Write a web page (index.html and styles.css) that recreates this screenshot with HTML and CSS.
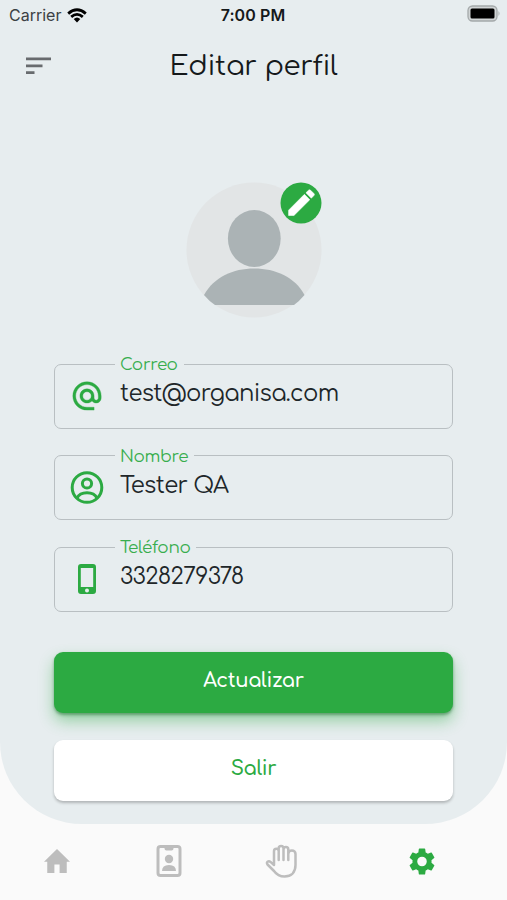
FILE: index.html
```html
<!DOCTYPE html>
<html lang="es">
<head>
<meta charset="utf-8">
<title>Editar perfil</title>
<link rel="stylesheet" href="styles.css">
</head>
<body>
<main class="panel">
  <div class="status">
    <div class="carrier"><span>Carrier</span>
      <svg width="20" height="15" viewBox="0 0 20 15" fill="none" stroke="#000" stroke-width="2.8"><path d="M1.2 5.6Q10-2 18.8 5.6M4.2 8.9Q10 3.9 15.8 8.9"/><path d="M6.7 11.1Q10 8 13.3 11.1L10 14.6Z" fill="#000" stroke="none"/></svg>
    </div>
    <div class="time">7:00 PM</div>
    <svg class="battery" width="34" height="18" viewBox="0 0 34 18"><rect x="1" y="1" width="29" height="15" rx="4.5" fill="#d0d4d5" stroke="#a4a9aa" stroke-width="1.3"/><rect x="3.500" y="3.500" width="24" height="10" rx="1.500" fill="#000"/><path d="M31.5 6q2 2.500 0 5z" fill="#a4a9aa"/></svg>
  </div>
  <header class="header">
    <svg class="menu" width="26" height="18" viewBox="0 0 26 18" fill="#686b6e"><path d="M0 .5h25v2.800H0zM0 7.500h16.500v2.800H0zM0 14.200h8.500v2.800H0z"/></svg>
    <h1>Editar perfil</h1>
  </header>
  <div class="avatar">
    <svg width="136" height="136" viewBox="0 0 136 136"><circle cx="68" cy="68" r="67.500" fill="#e2e5e6"/><ellipse cx="68.300" cy="56.500" rx="26.400" ry="28.500" fill="#abb3b5"/><path d="M18 113C28 95 47 86.500 68.200 86.500S109 95 118.500 113Q113.500 119 108 123H29Q23 119 18 113Z" fill="#abb3b5"/></svg>
    <svg class="edit" width="42" height="42" viewBox="0 0 42 42"><circle cx="21" cy="21" r="20.500" fill="#2caa42"/><path transform="translate(4.300 3.500) scale(1.430)" d="M3 17.250V21h3.750L17.810 9.940l-3.750-3.750L3 17.250zM20.710 7.040a1 1 0 0 0 0-1.410l-2.340-2.340a1 1 0 0 0-1.410 0l-1.830 1.830 3.750 3.750 1.830-1.830z" fill="#fff" stroke="#fff" stroke-width=".4" stroke-linejoin="round"/></svg>
  </div>
  <section class="form">
    <fieldset class="field"><legend>Correo</legend>
      <svg class="icon" width="34" height="34" viewBox="0 0 24 24" fill="#2caa42" stroke="#2caa42" stroke-width=".25"><path d="M12 1.950c-5.520 0-10 4.480-10 10s4.480 10 10 10h5v-2h-5c-4.340 0-8-3.660-8-8s3.660-8 8-8 8 3.660 8 8v1.430c0 .79-.71 1.570-1.500 1.570s-1.500-.78-1.500-1.570v-1.430c0-2.760-2.240-5-5-5s-5 2.240-5 5 2.240 5 5 5c1.380 0 2.640-.56 3.540-1.470.65.890 1.770 1.470 2.960 1.470 1.970 0 3.500-1.600 3.500-3.570v-1.430c0-5.520-4.480-10-10-10zm0 13c-1.660 0-3-1.340-3-3s1.340-3 3-3 3 1.340 3 3-1.340 3-3 3z"/></svg>
      <span class="value">test@organisa.com</span>
    </fieldset>
    <fieldset class="field"><legend>Nombre</legend>
      <svg class="icon" width="34" height="34" viewBox="0 0 34 34" fill="none" stroke="#2caa42" stroke-width="3"><circle cx="17" cy="16.500" r="14.800"/><circle cx="17" cy="12.500" r="4.600"/><path d="M7 27C9 23 13 21.800 17 21.800S25 23 27 27"/></svg>
      <span class="value">Tester QA</span>
    </fieldset>
    <fieldset class="field"><legend>Teléfono</legend>
      <svg class="icon" width="34" height="34" viewBox="0 0 34 34"><path fill="#2caa42" fill-rule="evenodd" d="M11 2h12q3 0 3 3v24q0 3-3 3H11q-3 0-3-3V5q0-3 3-3zm-.2 4v19h12.400V6zM17 26.500a2 2 0 1 0 0 4a2 2 0 1 0 0-4z"/></svg>
      <span class="value">3328279378</span>
    </fieldset>
  </section>
  <button class="btn primary">Actualizar</button>
  <button class="btn plain">Salir</button>
</main>
<nav class="tabs">
  <svg width="26" height="24" viewBox="2 3 20 17" preserveAspectRatio="none" fill="#bdbdbd"><path d="M10 20v-6h4v6h5.500v-8H22L12 3 2 12h2.500v8z"/></svg>
  <svg width="26" height="34" viewBox="0 0 26 34"><rect x="2" y="2.500" width="22" height="29" rx="2.500" fill="none" stroke="#bdbdbd" stroke-width="3"/><path d="M8.500 2h9v2.500q0 2-2 2h-5q-2 0-2-2zM6 27q0-6 7-6t7 6z" fill="#bdbdbd"/><circle cx="13" cy="15" r="4.200" fill="#bdbdbd"/></svg>
  <svg width="33" height="34" viewBox="0 0 33 34" fill="none" stroke="#bdbdbd" stroke-width="2.500" stroke-linecap="round" stroke-linejoin="round"><path d="M9 21V7.200a2.300 2.300 0 0 1 4.700 0V4.300a2.300 2.300 0 0 1 4.800 0V5.500a2.300 2.300 0 0 1 4.800 0V10a3.500 3.500 0 0 1 7.200 0V21c0 7.500-4.500 11.500-11 11.500-5 0-8-2-10.500-5.500L2.500 20.500c-1.800-2.200 1-4.200 3-2.600L9 21M13.700 7v9M18.500 5v11M23.300 9v7"/></svg>
  <svg width="26" height="27" viewBox="2.200 2 19.600 20" preserveAspectRatio="none" fill="#2caa42"><path d="M19.140 12.940c.04-.3.060-.61.060-.94s-.02-.64-.07-.94l2.030-1.580a.49.490 0 0 0 .12-.61l-1.920-3.320a.49.490 0 0 0-.59-.22l-2.390.96a7 7 0 0 0-1.620-.94l-.36-2.540a.48.480 0 0 0-.48-.41h-3.840a.47.470 0 0 0-.47.410l-.36 2.540c-.59.240-1.130.57-1.620.94l-2.390-.96a.48.480 0 0 0-.59.220L2.740 8.870a.47.470 0 0 0 .12.610l2.030 1.580a6 6 0 0 0-.02 1.880l-2.030 1.580a.49.490 0 0 0-.12.610l1.920 3.320c.12.220.37.290.59.220l2.390-.96c.5.380 1.030.7 1.620.94l.36 2.540c.05.240.24.410.48.410h3.840c.24 0 .44-.17.470-.41l.36-2.540c.59-.24 1.130-.56 1.620-.94l2.390.96c.22.080.47 0 .59-.22l1.920-3.320a.47.470 0 0 0-.12-.61zM12 15.600a3.600 3.600 0 1 1 0-7.200 3.600 3.600 0 0 1 0 7.200z"/></svg>
</nav>
</body>
</html>
```
FILE: styles.css
```css
* { box-sizing: border-box; }
body { margin: 0; height: 900px; background: #fafafa; font-family: Comfortaa, Lato, sans-serif; color: #202629; overflow: hidden; }
svg { display: block; flex: none; }
.panel { height: 824px; background: #e7edef; border-radius: 0 0 82px 82px; display: flex; flex-direction: column; }
.status { height: 30px; display: grid; grid-template-columns: 1fr auto 1fr; align-items: center; padding: 0 9px 0 9px; font: 16px/30px Inter, sans-serif; }
.carrier { display: flex; align-items: center; gap: 6px; color: #3c4144; }
.time { font-weight: 600; color: #15191b; letter-spacing: .1px; margin-left: -1px; }
.battery { justify-self: end; margin: -2px -3px 0 0; }
.header { height: 72px; display: grid; grid-template-columns: 120px 1fr 120px; align-items: center; }
.menu { margin-left: 26px; }
h1 { margin: 0; text-align: center; font-size: 27.6px; font-weight: 400; line-height: 36px; letter-spacing: -.3px; color: #15191b; white-space: nowrap; }
.avatar { position: relative; width: 136px; height: 136px; margin: 80px auto 0 186px; }
.edit { position: absolute; left: 94px; top: 0; }
.form { display: flex; flex-direction: column; gap: 18px; padding: 37px 54px 0; }
.field { height: 73.5px; margin: 0; padding: 0 0 0 15px; border: 1.5px solid #b9bfc2; border-radius: 7px; display: flex; align-items: flex-start; min-width: 0; }
legend { margin-left: 45px; padding: 1px 6px 0 5px; font-size: 16.8px; line-height: 17px; letter-spacing: -.35px; color: #38ad4e; }
.icon { margin-top: 6px; }
.value { margin-left: 16px; font-size: 22.7px; line-height: 30px; margin-top: 6px; letter-spacing: -.65px; white-space: nowrap; }
.btn { font: 600 19.5px/24px Comfortaa, Lato, sans-serif; border: 0; height: 61px; margin: 0 54px; border-radius: 9px; padding: 0 0 3px; letter-spacing: -.3px; flex: none; }
.primary { margin-top: 40px; background: #2caa42; color: #fff; box-shadow: 0 2px 3px #1b6b2d80, 0 8px 15px #2caa4270; }
.plain { margin-top: 27px; background: #fff; color: #2caa42; box-shadow: 0 2px 3px #0000003d; }
.tabs { height: 74px; display: grid; grid-template-columns: repeat(3, 112.5px) 168px; justify-items: center; align-items: center; padding-left: .5px; }
```
